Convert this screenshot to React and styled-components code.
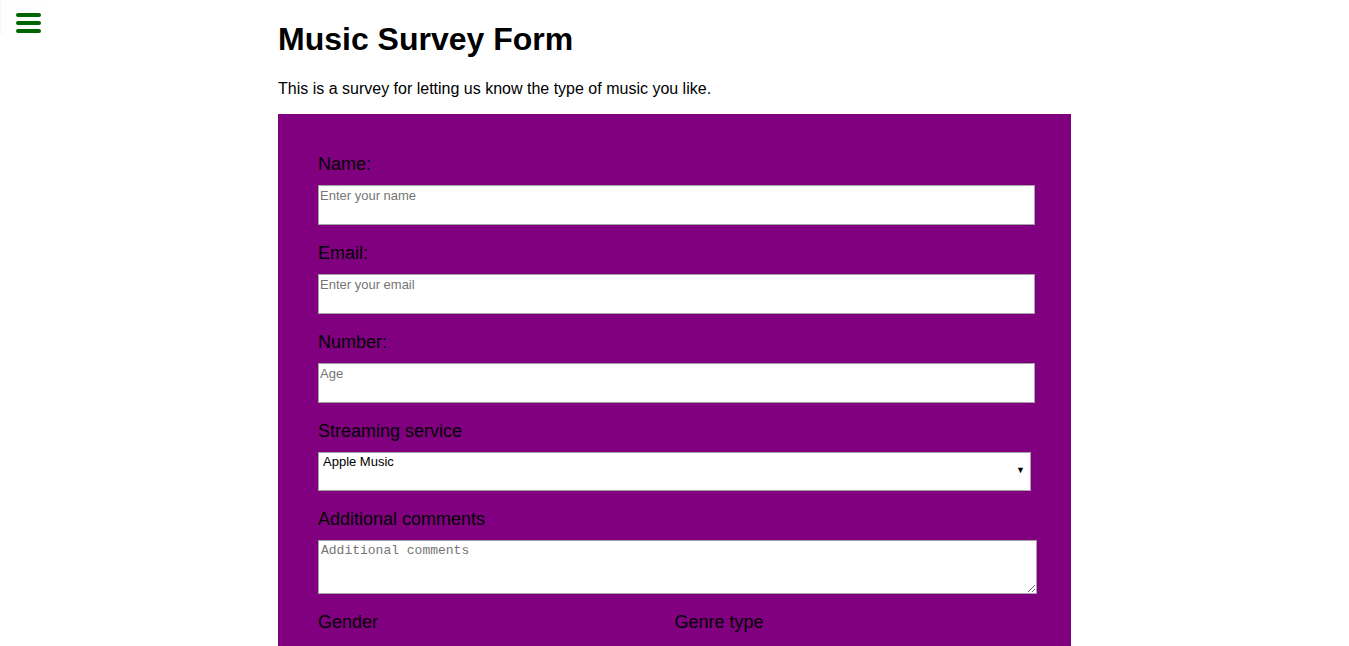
import React from "react";
import styled, { createGlobalStyle } from "styled-components";

const GlobalStyle = createGlobalStyle`
  html, body {
    margin: 0;
    padding: 0;
    background: #fff;
  }
  body {
    font-family: "Liberation Sans", Arial, sans-serif;
    color: #000;
  }
`;

const App = () => {
  return (
    <>
      <GlobalStyle />
      <SideNav>
        <MenuButton aria-label="menu">
          <Bar />
          <Bar />
          <Bar />
        </MenuButton>
      </SideNav>
      <Main>
        <Title>Music Survey Form</Title>
        <Intro>This is a survey for letting us know the type of music you like.</Intro>
        <Form onSubmit={(e) => e.preventDefault()}>
          <Field>
            <Label htmlFor="name">Name:</Label>
            <TextInput id="name" type="text" placeholder="Enter your name" />
          </Field>
          <Field>
            <Label htmlFor="email">Email:</Label>
            <TextInput id="email" type="email" placeholder="Enter your email" />
          </Field>
          <Field>
            <Label htmlFor="number">Number:</Label>
            <TextInput id="number" type="number" placeholder="Age" />
          </Field>
          <Field>
            <Label htmlFor="service">Streaming service</Label>
            <SelectWrap>
              <Select id="service" defaultValue="apple">
                <option value="apple">Apple Music</option>
                <option value="spotify">Spotify</option>
                <option value="tidal">Tidal</option>
                <option value="youtube">YouTube Music</option>
              </Select>
              <Arrow>▼</Arrow>
            </SelectWrap>
          </Field>
          <Field>
            <Label htmlFor="comments">Additional comments</Label>
            <Textarea id="comments" placeholder="Additional comments" />
          </Field>
          <Columns>
            <Column>
              <Label as="p">Gender</Label>
            </Column>
            <Column>
              <Label as="p">Genre type</Label>
            </Column>
          </Columns>
        </Form>
      </Main>
    </>
  );
};

const SideNav = styled.nav`
  position: fixed;
  top: 0;
  left: 0;
  width: 48px;
  height: 35px;
  background: #fefefe;
  border-left: 1px solid #f6f6f6;
  z-index: 2;
`;

const MenuButton = styled.button`
  display: flex;
  flex-direction: column;
  gap: 4.5px;
  padding: 0;
  margin: 13px 0 0 15px;
  background: none;
  border: none;
  cursor: pointer;
`;

const Bar = styled.span`
  display: block;
  width: 25px;
  height: 3.5px;
  border-radius: 2px;
  background: #006400;
`;

const Main = styled.main`
  width: 793px;
  margin: 0 auto;
`;

const Title = styled.h1`
  font-size: 32px;
  font-weight: bold;
  margin: 21.44px 0;
`;

const Intro = styled.p`
  font-size: 16px;
  margin: 16px 0;
`;

const Form = styled.form`
  background: purple;
  padding: 40px 40px 60px;
`;

const Field = styled.div`
  margin-bottom: 18px;
`;

const Label = styled.label`
  display: block;
  font-size: 18px;
  margin: 0 0 10px;
  color: #000;
`;

const TextInput = styled.input`
  display: block;
  width: 100%;
  box-sizing: content-box;
  height: 15px;
  padding: 2px 1px 21px 1px;
  border: 1px solid #a3a3a3;
  font-family: "Liberation Sans", Arial, sans-serif;
  font-size: 13px;
  background: #fff;
  outline: none;

  &::placeholder {
    color: #757575;
  }
  &::-webkit-inner-spin-button,
  &::-webkit-outer-spin-button {
    -webkit-appearance: none;
  }
`;

const SelectWrap = styled.div`
  position: relative;
`;

const Select = styled.select`
  display: block;
  width: 100%;
  height: 39px;
  box-sizing: border-box;
  appearance: none;
  border: 1px solid #a3a3a3;
  border-radius: 0;
  background: #fff;
  padding: 0 20px 20px 4px;
  font-family: "Liberation Sans", Arial, sans-serif;
  font-size: 13px;
  color: #000;
`;

const Arrow = styled.span`
  position: absolute;
  right: 6px;
  top: 13px;
  font-size: 9px;
  line-height: 10px;
  pointer-events: none;
`;

const Textarea = styled.textarea`
  display: block;
  width: 100%;
  box-sizing: content-box;
  height: 48px;
  padding: 2px;
  border: 1px solid #a3a3a3;
  font-family: "Liberation Mono", "Courier New", monospace;
  font-size: 13px;

  &::placeholder {
    color: #757575;
  }
`;

const Columns = styled.div`
  display: grid;
  grid-template-columns: 1fr 1fr;
`;

const Column = styled.div`
  display: flex;
  flex-direction: column;
`;

export default App;
